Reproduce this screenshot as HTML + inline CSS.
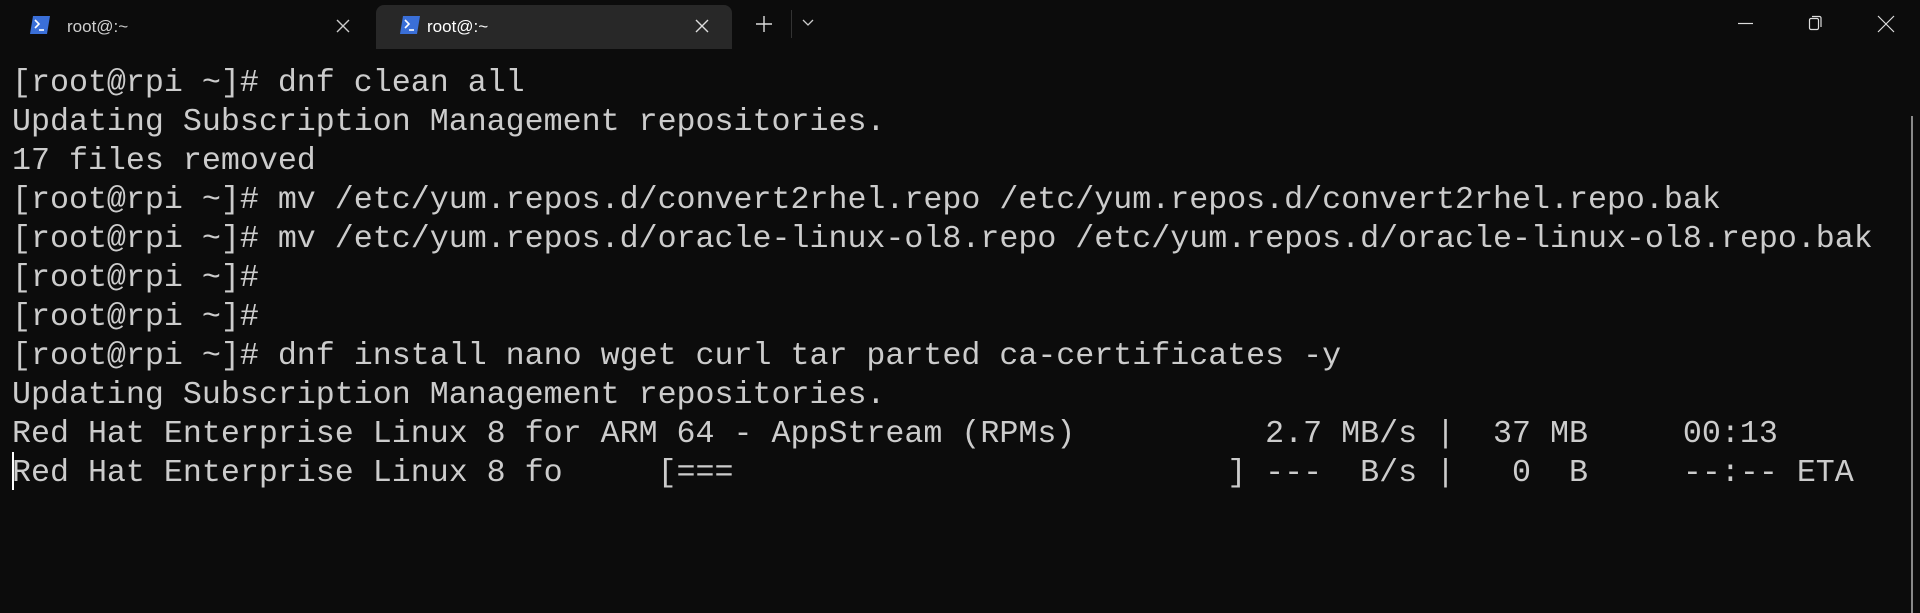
<!DOCTYPE html>
<html><head><meta charset="utf-8"><style>
html,body{margin:0;padding:0;width:1920px;height:613px;background:#0c0c0c;overflow:hidden}
.bar{position:absolute;left:0;top:0;width:1920px;height:49px;background:#0c0c0c}
.tab{position:absolute;top:5px;height:44px;font:17px "Liberation Sans",sans-serif;color:#cfcfcf}
.tab.active{background:#282828;border-radius:8px 8px 0 0;color:#fff}
.ico{position:absolute;top:11px;width:20px;height:18px}
.ttl{position:absolute;top:12px}
.x{position:absolute;top:10px}
pre{position:absolute;left:12px;top:64px;margin:0;font:31.65px/39px "Liberation Mono",monospace;color:#cccccc}
.cur{position:absolute;left:12px;top:452px;width:2px;height:38px;background:#fff}
.sb{position:absolute;left:1911px;top:116px;width:2px;height:497px;background:#8a8a8a}
</style></head><body>
<div class="bar">
 <div class="tab" style="left:0;width:372px">
  <svg class="ico" style="left:30px" viewBox="0 0 20 18"><path d="M3 0H20L17 18H0Z" fill="#3a6fd8"/><path d="M5 4L9 8L5 12" stroke="#fff" stroke-width="1.6" fill="none"/><path d="M9 14H14" stroke="#fff" stroke-width="1.6"/></svg>
  <span class="ttl" style="left:67px">root@:~</span>
  <svg class="x" style="left:335px" width="16" height="22" viewBox="0 0 16 22"><path d="M2 5L14 17M14 5L2 17" stroke="#ccc" stroke-width="1.4"/></svg>
 </div>
 <div class="tab active" style="left:376px;width:356px">
  <svg class="ico" style="left:24px" viewBox="0 0 20 18"><path d="M3 0H20L17 18H0Z" fill="#3a6fd8"/><path d="M5 4L9 8L5 12" stroke="#fff" stroke-width="1.6" fill="none"/><path d="M9 14H14" stroke="#fff" stroke-width="1.6"/></svg>
  <span class="ttl" style="left:51px">root@:~</span>
  <svg class="x" style="left:318px" width="16" height="22" viewBox="0 0 16 22"><path d="M2 5L14 17M14 5L2 17" stroke="#ddd" stroke-width="1.4"/></svg>
 </div>
 <svg style="position:absolute;left:755px;top:15px" width="18" height="18"><path d="M9 1V17M1 9H17" stroke="#ddd" stroke-width="1.4"/></svg>
 <div style="position:absolute;left:791px;top:10px;width:1px;height:28px;background:#333"></div>
 <svg style="position:absolute;left:802px;top:19px" width="12" height="8"><path d="M1 1L6 6L11 1" stroke="#ccc" stroke-width="1.3" fill="none"/></svg>
 <svg style="position:absolute;left:1738px;top:22px" width="16" height="3"><path d="M0 1.5H15" stroke="#ddd" stroke-width="1.2"/></svg>
 <svg style="position:absolute;left:1808px;top:15px" width="16" height="16"><rect x="1.5" y="3.5" width="9" height="11" rx="1.5" stroke="#ddd" stroke-width="1.2" fill="none"/><path d="M4 1.5H11.5A1.5 1.5 0 0 1 13 3V12" stroke="#ddd" stroke-width="1.2" fill="none"/></svg>
 <svg style="position:absolute;left:1877px;top:15px" width="18" height="18"><path d="M1 1L17 17M17 1L1 17" stroke="#ddd" stroke-width="1.2"/></svg>
</div>
<pre>[root@rpi ~]# dnf clean all
Updating Subscription Management repositories.
17 files removed
[root@rpi ~]# mv /etc/yum.repos.d/convert2rhel.repo /etc/yum.repos.d/convert2rhel.repo.bak
[root@rpi ~]# mv /etc/yum.repos.d/oracle-linux-ol8.repo /etc/yum.repos.d/oracle-linux-ol8.repo.bak
[root@rpi ~]#
[root@rpi ~]#
[root@rpi ~]# dnf install nano wget curl tar parted ca-certificates -y
Updating Subscription Management repositories.
Red Hat Enterprise Linux 8 for ARM 64 - AppStream (RPMs)          2.7 MB/s |  37 MB     00:13
Red Hat Enterprise Linux 8 fo     [===                          ] ---  B/s |   0  B     --:-- ETA</pre>
<div class="cur"></div>
<div class="sb"></div>
</body></html>
